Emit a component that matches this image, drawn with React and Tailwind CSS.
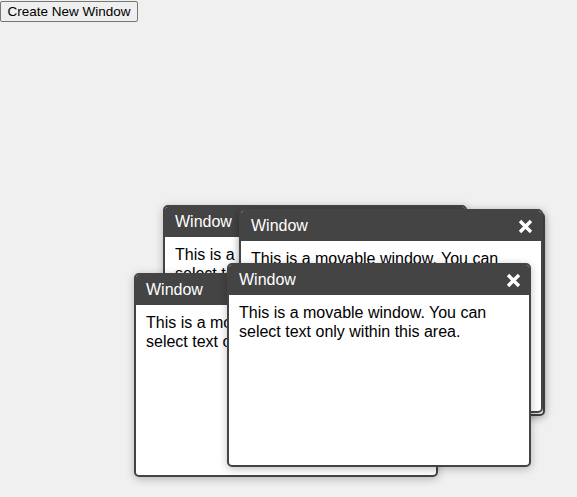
import React from "react";

function CloseIcon() {
  return (
    <svg width="15" height="15" viewBox="0 0 15 15" className="block">
      <path d="M2 2 L13 13 M13 2 L2 13" stroke="white" strokeWidth="3.4" strokeLinecap="butt" />
    </svg>
  );
}

function Win({ x, y, z }) {
  return (
    <div
      className="absolute w-[304px] h-[204px] border-2 border-[#444] rounded-[5px] bg-white overflow-hidden flex flex-col shadow-[0_2px_8px_rgba(0,0,0,0.25)]"
      style={{ left: x, top: y, zIndex: z }}
    >
      <div className="bg-[#444] text-white flex items-center justify-between pl-[10px] pr-[8px] py-[6px] text-[16px] leading-[18px]">
        <span>Window</span>
        <CloseIcon />
      </div>
      <div className="px-[10px] pt-[8px] text-black text-[16px] leading-[19px]">
        This is a movable window. You can select text only within this area.
      </div>
    </div>
  );
}

export default function App() {
  return (
    <div className="relative w-[577px] h-[497px] bg-[#f0f0f0] overflow-hidden font-['Liberation_Sans',Arial,sans-serif]">
      <button className="absolute left-0 top-[1px] h-[21px] w-[138px] bg-[#efefef] border border-[#767676] rounded-[2px] text-[13.5px] leading-[15px] text-black">
        Create New Window
      </button>
      <Win x={163} y={205} z={1} />
      <Win x={241} y={212} z={2} />
      <Win x={239} y={209} z={3} />
      <Win x={134} y={273} z={4} />
      <Win x={227} y={263} z={5} />
    </div>
  );
}
